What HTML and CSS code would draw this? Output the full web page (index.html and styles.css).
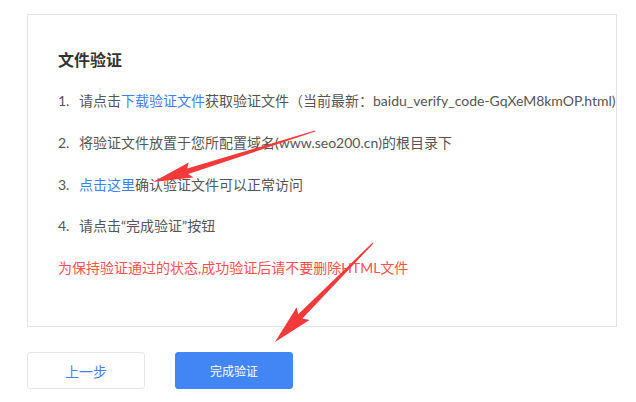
FILE: index.html
```html
<!DOCTYPE html>
<html lang="zh-CN">
<head>
<meta charset="utf-8">
<title>文件验证</title>
<link rel="stylesheet" href="styles.css">
</head>
<body>
<div class="page">
  <section class="card">
    <h2 class="title">文件验证</h2>
    <ol class="steps">
      <li><span class="num">1.</span>请点击<a class="link">下载验证文件</a>获取验证文件（当前最新：baidu_verify_code-GqXeM8kmOP.html)</li>
      <li><span class="num">2.</span>将验证文件放置于您所配置域名(www.seo200.cn)的根目录下</li>
      <li><span class="num">3.</span><a class="link">点击这里</a>确认验证文件可以正常访问</li>
      <li><span class="num">4.</span>请点击“完成验证”按钮</li>
      <li class="warn">为保持验证通过的状态,成功验证后请不要删除HTML文件</li>
    </ol>
  </section>
  <div class="actions">
    <button class="btn btn-ghost">上一步</button>
    <button class="btn btn-primary">完成验证</button>
  </div>
  <svg class="arrows" width="636" height="402" viewBox="0 0 636 402">
    <polygon fill="#f23a3a" points="315,130.4 187.2,168.6 188.7,162.4 153,182 193.5,177.6 188.2,174 315.3,131.6"/>
    <polygon fill="#f23a3a" points="372.4,242.8 298.2,314.3 296.7,307.3 275,342 309.5,319.9 302.4,318.5 373.4,243.6"/>
  </svg>
</div>
</body>
</html>
```
FILE: styles.css
```css
html, body {
  margin: 0;
  padding: 0;
  background: #ffffff;
}
body {
  font-family: "Lato", "Noto Sans CJK SC", sans-serif;
  color: #555555;
}
.page {
  position: relative;
  width: 636px;
  height: 402px;
  overflow: hidden;
  padding: 14px 0 0 27px;
  box-sizing: border-box;
}
.card {
  width: 590px;
  height: 313px;
  box-sizing: border-box;
  border: 1px solid #e3e3e3;
  padding: 34px 0 0 30px;
}
.title {
  margin: 0;
  font-size: 16px;
  line-height: 22px;
  font-weight: bold;
  color: #333333;
}
.steps {
  list-style: none;
  margin: 20px 0 0 0;
  padding: 0;
  display: flex;
  flex-direction: column;
  gap: 21.75px;
  font-size: 14px;
  line-height: 20px;
  white-space: nowrap;
}
.num {
  display: inline-block;
  width: 21px;
}
.link {
  color: #3f7ff5;
  cursor: pointer;
}
.warn {
  color: #ff4f4f;
}
.actions {
  display: flex;
  gap: 30px;
  margin-top: 25px;
}
.btn {
  width: 118px;
  height: 37px;
  border-radius: 3px;
  font-family: "Lato", "Noto Sans CJK SC", sans-serif;
  padding: 0;
}
.btn-ghost {
  background: #ffffff;
  border: 1px solid #e6e6e6;
  color: #4a7ff0;
  font-size: 14px;
}
.btn-primary {
  background: #4286f5;
  border: 1px solid #4286f5;
  color: #ffffff;
  font-size: 12px;
}
.arrows {
  position: absolute;
  left: 0;
  top: 0;
  pointer-events: none;
}
```
